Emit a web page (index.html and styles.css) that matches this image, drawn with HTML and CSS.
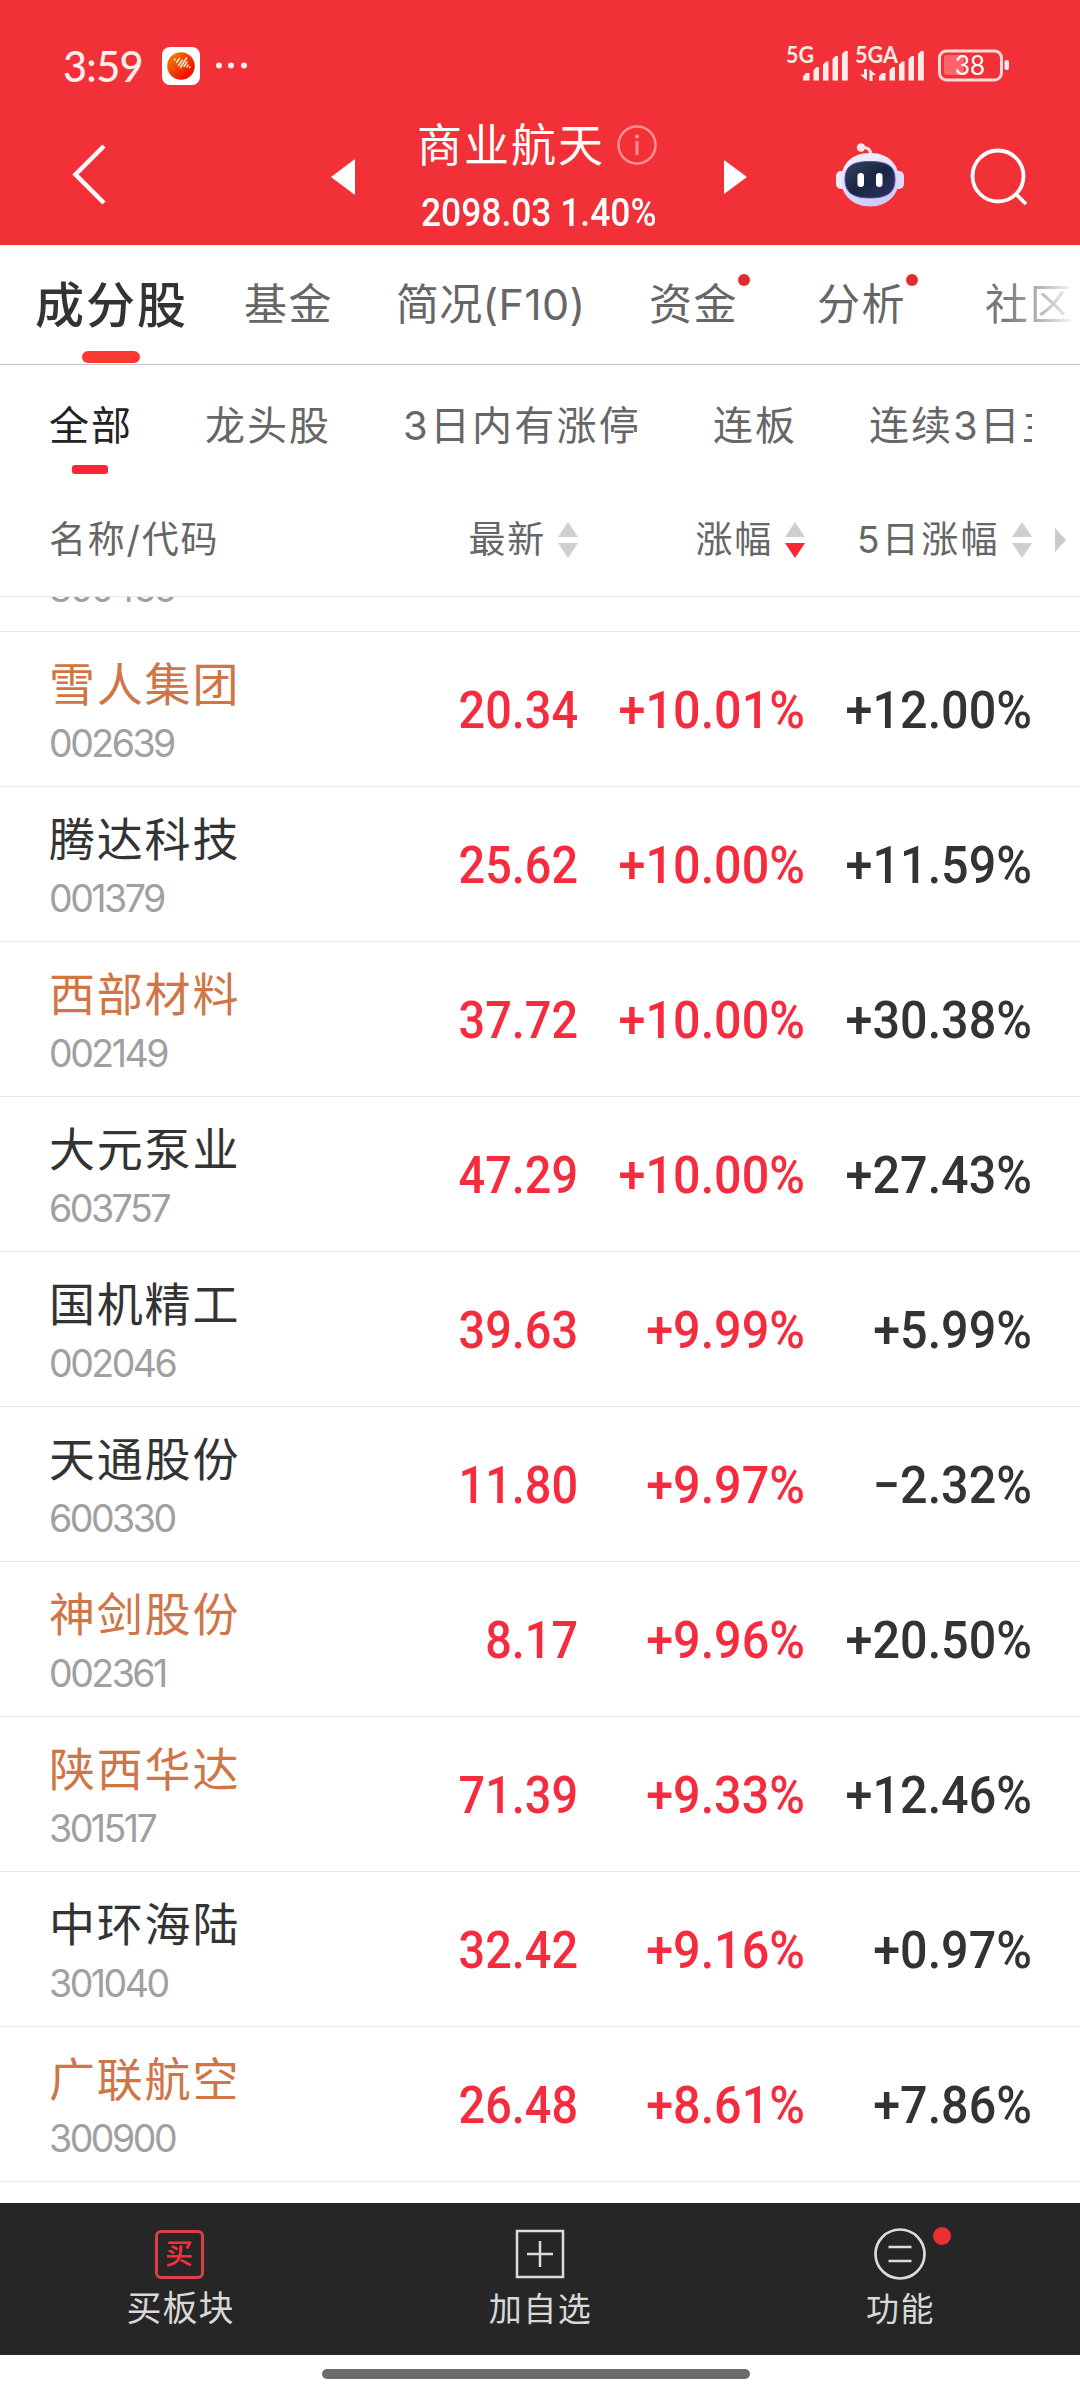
FILE: index.html
```html
<!DOCTYPE html>
<html lang="zh-CN">
<head>
<meta charset="utf-8">
<title>商业航天</title>
<link rel="stylesheet" href="styles.css">
</head>
<body>
<header class="top">
  <div class="status">
    <span class="clock">3:59</span>
    <svg class="app" width="38" height="38" viewBox="0 0 38 38"><defs><linearGradient id="g" x1="0" y1="0" x2="1" y2="1"><stop offset="0" stop-color="#f58a00"/><stop offset=".75" stop-color="#f01400"/></linearGradient></defs><rect width="38" height="38" rx="8" fill="#fff"/><circle cx="19" cy="19" r="13.8" fill="url(#g)"/><path d="M12.500 13l.5-1M14.500 15.500l3-4M16.500 18.500l4-5.500M18.500 20.500l6-9.500M22 19.500l3-4.500M25 20l1-2M27.500 20.500l.3-.8" stroke="#fff3d0" stroke-width="1.500" stroke-linecap="round"/></svg>
    <svg class="more" width="34" height="38" viewBox="0 0 34 38" fill="#ffeff0"><circle cx="5" cy="18.500" r="3"/><circle cx="17" cy="18.500" r="3"/><circle cx="30" cy="18.500" r="3"/></svg>
    <svg class="radio" width="230" height="40" viewBox="0 0 230 40">
      <g fill="#ffeaea">
        <text class="net" x="6" y="20.500" textLength="28" lengthAdjust="spacingAndGlyphs">5G</text>
        <text class="net" x="75" y="20.500" textLength="43" lengthAdjust="spacingAndGlyphs">5GA</text>
        <path d="M23 38.500v-4l3-3.500h3.500v7.500zM33.500 38.500V28l3-3h2.500v13.500zM43 38.500V22.500l3-3h2.500v19zM52.500 38.500V17l3-3h2.500v24.500zM62 38.500V12l3-3h2.800v29.500z"/>
        <path d="M99 38.500v-4l3-3.500h3.500v7.500zM109.500 38.500V28l3-3h2.500v13.500zM119 38.500V22.500l3-3h2.500v19zM128.500 38.500V17l3-3h2.500v24.500zM138 38.500V12l3-3h2.800v29.500z"/>
        <path d="M84 27h3v11.500l-7-6h4zM89.500 39V27l6.500 6h-3.500v6z"/>
        <rect x="224.500" y="18" width="4.500" height="10" rx="2"/>
      </g>
      <rect x="164" y="13" width="20" height="20" rx="3" fill="#ff666b"/>
      <rect x="159.500" y="9" width="62" height="29" rx="7" fill="none" stroke="#ffd9da" stroke-width="3"/>
      <text class="batt" x="175" y="32.500" textLength="30" lengthAdjust="spacingAndGlyphs">38</text>
    </svg>
  </div>
  <div class="nav">
    <svg class="back" width="50" height="70" viewBox="0 0 50 70" fill="none" stroke="#fff" stroke-width="4.500"><path d="M44 7L15.500 35.500 44 64"/></svg>
    <svg class="prev" width="24" height="36" viewBox="0 0 24 36"><path d="M24 0v36L0 18z" fill="#fff"/></svg>
    <div class="heading">
      <div class="title">商业航天<svg width="40" height="40" viewBox="0 0 40 40"><circle cx="20" cy="20" r="18.500" fill="none" stroke="#ff9195" stroke-width="2.500"/><circle cx="20" cy="11.500" r="2" fill="#ff9195"/><path d="M20 16v14" stroke="#ff9195" stroke-width="3"/></svg></div>
      <div class="quote"><span>2098.03 1.40%</span></div>
    </div>
    <svg class="next" width="23" height="34" viewBox="0 0 23 34"><path d="M0 0v34l23-17z" fill="#fff"/></svg>
    <svg class="robot" width="70" height="68" viewBox="0 0 70 68">
      <defs><linearGradient id="h" x1="0" y1="0" x2="0.400" y2="1"><stop offset="0" stop-color="#f8f4fb"/><stop offset="1" stop-color="#cfcdf8"/></linearGradient><linearGradient id="f" x1="0" y1="0" x2="1" y2="1"><stop offset="0" stop-color="#34425f"/><stop offset=".5" stop-color="#1a2644"/><stop offset="1" stop-color="#2c3560"/></linearGradient></defs>
      <path d="M26 6.500q10-1 10 8" fill="none" stroke="#f5dfee" stroke-width="3"/><circle cx="26" cy="6.500" r="4.200" fill="#fbe4ec"/>
      <rect x="1" y="30" width="12" height="18" rx="5" fill="#ececfc"/><rect x="57" y="30" width="12" height="18" rx="5" fill="#dddafa"/>
      <path d="M35 12c20 0 29 13 29 27S53 65.500 35 65.500 6 53 6 39s9-27 29-27z" fill="url(#h)"/>
      <path d="M35 20.500c18 0 25 5 25 18S52 57 35 57 10 51.500 10 38.500s7-18 25-18z" fill="url(#f)" stroke="#5a4ac0" stroke-width="1"/>
      <rect x="22.500" y="32" width="6.500" height="14" rx="3.200" fill="#fff"/><rect x="41" y="32" width="6.500" height="14" rx="3.200" fill="#fff"/>
    </svg>
    <svg class="search" width="62" height="62" viewBox="0 0 62 62" fill="none" stroke="#fff" stroke-width="3.800"><circle cx="30" cy="30" r="25.500"/><path d="M48 48l10 10"/></svg>
  </div>
</header>
<nav class="tabs">
  <div class="tab on">成分股</div>
  <div class="tab t2">基金</div>
  <div class="tab t3">简况(F10)</div>
  <div class="tab t4 dot">资金</div>
  <div class="tab t5 dot">分析</div>
  <div class="tab t6">社区</div>
</nav>
<nav class="filters">
  <div class="filter on">全部</div>
  <div class="filter f2">龙头股</div>
  <div class="filter f3">3日内有涨停</div>
  <div class="filter f4">连板</div>
  <div class="filter f5">连续3日主</div>
</nav>
<div class="cols">
  <div class="c0">名称/代码</div>
  <div class="c">最新<svg class="sort" width="20" height="36" viewBox="0 0 20 36" fill="#cfcfcf"><path d="M0 15L10 0l10 15z"/><path d="M0 21h20L10 36z"/></svg></div>
  <div class="c">涨幅<svg class="sort" width="20" height="36" viewBox="0 0 20 36" fill="#cfcfcf"><path d="M0 15L10 0l10 15z"/><path d="M0 21h20L10 36z" fill="#fd2438"/></svg></div>
  <div class="c five">5日涨幅<svg class="sort" width="20" height="36" viewBox="0 0 20 36" fill="#cfcfcf"><path d="M0 15L10 0l10 15z"/><path d="M0 21h20L10 36z"/></svg></div>
  <svg class="right" width="11" height="24" viewBox="0 0 11 24"><path d="M0 0l11 12L0 24z" fill="#cacaca"/></svg>
</div>
<main class="list">
  <div class="row cut"><div class="who"><div class="code">300455</div></div></div>
  <div class="row"><div class="who hot"><div class="name">雪人集团</div><div class="code">002639</div></div><div class="v price">20.34</div><div class="v up">+10.01%</div><div class="v">+12.00%</div></div>
  <div class="row"><div class="who"><div class="name">腾达科技</div><div class="code">001379</div></div><div class="v price">25.62</div><div class="v up">+10.00%</div><div class="v">+11.59%</div></div>
  <div class="row"><div class="who hot"><div class="name">西部材料</div><div class="code">002149</div></div><div class="v price">37.72</div><div class="v up">+10.00%</div><div class="v">+30.38%</div></div>
  <div class="row"><div class="who"><div class="name">大元泵业</div><div class="code">603757</div></div><div class="v price">47.29</div><div class="v up">+10.00%</div><div class="v">+27.43%</div></div>
  <div class="row"><div class="who"><div class="name">国机精工</div><div class="code">002046</div></div><div class="v price">39.63</div><div class="v up">+9.99%</div><div class="v">+5.99%</div></div>
  <div class="row"><div class="who"><div class="name">天通股份</div><div class="code">600330</div></div><div class="v price">11.80</div><div class="v up">+9.97%</div><div class="v">−2.32%</div></div>
  <div class="row"><div class="who hot"><div class="name">神剑股份</div><div class="code">002361</div></div><div class="v price">8.17</div><div class="v up">+9.96%</div><div class="v">+20.50%</div></div>
  <div class="row"><div class="who hot"><div class="name">陕西华达</div><div class="code">301517</div></div><div class="v price">71.39</div><div class="v up">+9.33%</div><div class="v">+12.46%</div></div>
  <div class="row"><div class="who"><div class="name">中环海陆</div><div class="code">301040</div></div><div class="v price">32.42</div><div class="v up">+9.16%</div><div class="v">+0.97%</div></div>
  <div class="row"><div class="who hot"><div class="name">广联航空</div><div class="code">300900</div></div><div class="v price">26.48</div><div class="v up">+8.61%</div><div class="v">+7.86%</div></div>
</main>
<footer class="bar">
  <div class="act buy"><div class="ico"><span class="box">买</span></div><div class="lab">买板块</div></div>
  <div class="act"><div class="ico"><svg width="50" height="50" viewBox="0 0 50 50" fill="none" stroke="#dcdcdc" stroke-width="2.500"><rect x="2" y="2" width="46" height="46"/><path d="M12 25h26M25 12v26"/></svg></div><div class="lab">加自选</div></div>
  <div class="act"><div class="ico badge"><svg width="52" height="52" viewBox="0 0 52 52" fill="none" stroke="#dcdcdc" stroke-width="2.700"><circle cx="26" cy="26" r="24.500"/><path d="M14.500 19h23M14.500 33h23"/></svg></div><div class="lab">功能</div></div>
</footer>
<div class="home"></div>
</body>
</html>
```
FILE: styles.css
```css
* { box-sizing: border-box; }
body { margin: 0; width: 1080px; height: 2400px; overflow: hidden; background: #fff; color: #333; font-family: Inter, "Noto Sans CJK SC", sans-serif; display: flex; flex-direction: column; }
svg { display: block; flex: none; }

.top { height: 245px; flex: none; background: #f23037; color: #fff; }
.status { height: 110px; display: flex; align-items: flex-start; padding: 0 70px 0 63px; }
.clock { width: 99px; margin-top: 41px; font: 500 41.5px/50px Lato, sans-serif; letter-spacing: -0.7px; color: #ffecec; }
.app { margin-top: 47px; }
.more { margin: 47px 0 0 14px; }
.radio { margin: 42px 0 0 auto; }
.net { font: 700 22px Lato, sans-serif; }
.batt { font: 400 26px Lato, sans-serif; fill: #fff; }
.nav { height: 135px; display: flex; align-items: flex-start; }
.back { margin: 29px 0 0 60px; }
.prev { margin: 49px 0 0 221px; }
.heading { width: 250px; margin: 4px 0 0 62px; }
.title { display: flex; align-items: center; height: 62px; font-size: 45px; line-height: 58px; font-weight: 400; letter-spacing: 2px; white-space: nowrap; padding-top: 2px; }
.title svg { margin: 0 0 3px 12px; }
.quote { height: 50px; margin: 12px 0 0 4px; font: 500 39px/50px Roboto, sans-serif; white-space: nowrap; }
.quote span { display: inline-block; transform: scaleX(.907); transform-origin: left; }
.next { margin: 50px 0 0 57px; }
.robot { margin: 31px 0 0 88px; }
.search { margin: 36px 0 0 63px; }

.tabs { height: 120px; flex: none; display: flex; align-items: center; padding: 0 0 1px 35px; border-bottom: 1px solid #c6c6c6; overflow: hidden; white-space: nowrap; }
.tab { position: relative; flex: none; font-size: 43px; line-height: 60px; letter-spacing: 1.5px; color: #666; }
.tab.on { width: 209px; padding-top: 4px; font-size: 49px; font-weight: 500; letter-spacing: 2px; color: #333; }
.tab.on::after { content: ""; position: absolute; left: 47px; top: 79px; width: 58px; height: 12px; border-radius: 6px; background: #f93a30; }
.t2 { width: 152px; }
.t3 { width: 253px; letter-spacing: 0.3px; }
.t4, .t5 { width: 168px; }
.dot::after { content: ""; position: absolute; left: 89px; top: 0; width: 12px; height: 12px; border-radius: 50%; background: #df2d2e; }
.t6 { width: 89px; background: linear-gradient(90deg, #777 20%, #999 45%, #f4f4f4 98%); background-clip: text; -webkit-background-clip: text; color: transparent; }

.filters { width: 1032px; height: 122px; flex: none; display: flex; padding: 31px 0 0 49px; overflow: hidden; white-space: nowrap; }
.filter { position: relative; flex: none; font-size: 40px; line-height: 60px; letter-spacing: 2px; color: #666; }
.filter.on { width: 156px; color: #222; }
.filter.on::after { content: ""; position: absolute; left: 23px; top: 69px; width: 36px; height: 9px; border-radius: 3px; background: #fc2437; }
.f2 { width: 198px; }
.f3 { width: 310px; letter-spacing: 2.2px; }
.f4 { width: 156px; }

.cols { height: 110px; flex: none; display: grid; grid-template-columns: 302px 227px 227px 227px 23px 11px; padding: 0 0 3px 49px; align-items: center; border-bottom: 1px solid #e8e8e8; font-size: 37px; line-height: 50px; letter-spacing: 1.8px; color: #666; white-space: nowrap; }
.c { display: flex; align-items: center; justify-content: flex-end; }
.five { letter-spacing: 2.4px; }
.sort { margin: 0 0 0 12px; }
.right { grid-column: 6; }

.list { height: 1606px; flex: none; overflow: hidden; }
.row { height: 155px; display: grid; grid-template-columns: 302px 227px 227px 227px; padding-left: 49px; border-bottom: 1px solid #e8e8e8; align-items: center; }
.cut { margin-top: -120px; }
.who { align-self: end; padding-bottom: 19px; }
.name { font-size: 46px; line-height: 60px; letter-spacing: 1.8px; color: #333; margin-bottom: 7px; white-space: nowrap; }
.hot .name { color: #cf7647; }
.code { font-size: 37.5px; line-height: 46px; font-weight: 400; letter-spacing: -2.5px; color: #a0a0a0; }
.v { text-align: right; padding-top: 4px; font: 500 52px/60px Roboto, sans-serif; transform: scaleX(.933); transform-origin: right; color: #333; white-space: nowrap; }
.price { transform: scaleX(.9); }
.up, .price { color: #f42c3e; }

.bar { height: 152px; flex: none; display: grid; grid-template-columns: repeat(3, 1fr); background: #262626; }
.act { display: flex; flex-direction: column; align-items: center; padding-top: 25px; }
.ico { position: relative; width: 52px; height: 52px; display: flex; align-items: center; justify-content: center; }
.box { width: 49px; height: 49px; border: 3px solid #d8404a; border-radius: 6px; font-size: 28px; line-height: 43px; font-weight: 500; text-align: center; color: #fa2c42; }
.buy .ico { right: 1px; }
.badge::after { content: ""; position: absolute; left: 59px; top: -1px; width: 18px; height: 18px; border-radius: 50%; background: #ea3034; }
.lab { margin: 4px 0 0 1px; font-size: 33px; line-height: 50px; letter-spacing: 1.5px; color: #d8d8d8; }
.buy .lab { font-size: 35px; letter-spacing: 1px; margin-top: 3px; }
.home { width: 428px; height: 10px; flex: none; margin: 14px 0 0 322px; border-radius: 5px; background: #6a6a6a; }
```
